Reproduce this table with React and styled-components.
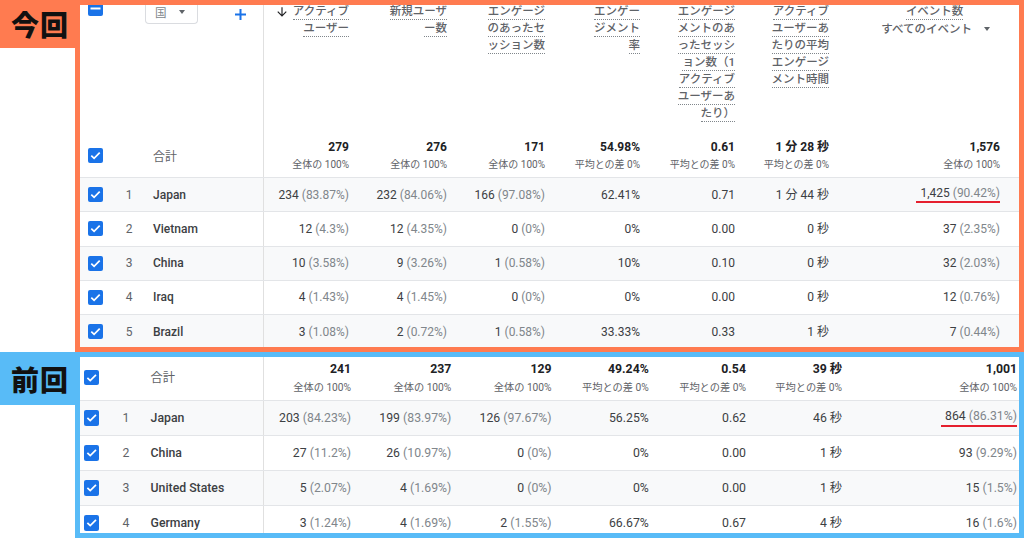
import React from 'react'
import styled, { createGlobalStyle } from 'styled-components'

const GlobalStyle = createGlobalStyle`
  * { box-sizing: border-box; }
  html, body { margin: 0; padding: 0; background: #fff; }
  body {
    width: 1024px;
    height: 538px;
    overflow: hidden;
    font-family: Roboto, "Noto Sans CJK JP", sans-serif;
    color: #3c4043;
  }
`

const COLS = '184px 98px 98px 98px 95px 95px 94px 177px'

const Page = styled.div`
  display: flex;
  flex-direction: column;
  width: 1024px;
  height: 538px;
`

const Section = styled.section`
  display: flex;
  height: ${({ $height }) => $height}px;
`

const Tag = styled.div`
  width: 75px;
  height: ${({ $h }) => $h}px;
  padding-left: 5px;
  display: flex;
  align-items: center;
  justify-content: center;
  background: ${({ $color }) => $color};
  font-family: "Noto Sans CJK JP", sans-serif;
  font-weight: 900;
  font-size: 28px;
  color: #111;
  letter-spacing: 1px;
`

const Frame = styled.div`
  flex: 1;
  border: 5px solid ${({ $color }) => $color};
  background: #fff;
  overflow: hidden;
`

const Table = styled.div`
  width: 939px;
  zoom: ${({ $zoom }) => $zoom || 1};
  margin: ${({ $mt }) => $mt || 0}px 0 0 ${({ $ml }) => $ml || 0}px;
`

const Row = styled.div`
  display: grid;
  grid-template-columns: ${COLS};
  height: ${({ $h }) => $h}px;
  background: ${({ $shade }) => ($shade ? '#f8f9fa' : '#fff')};
  border-bottom: ${({ $line }) => ($line ? '1px solid #e3e5e8' : 'none')};
  align-items: ${({ $top }) => ($top ? 'start' : 'stretch')};
`

const DimCell = styled.div`
  display: flex;
  align-items: ${({ $top }) => ($top ? 'flex-start' : 'center')};
  height: 100%;
  padding-left: 8px;
  border-right: 1px solid #e0e0e0;
`

const MetricCell = styled.div`
  display: flex;
  flex-direction: column;
  align-items: flex-end;
  justify-content: ${({ $top }) => ($top ? 'flex-start' : 'center')};
  height: 100%;
  padding-top: ${({ $top }) => ($top ? 2.5 : 0)}px;
  padding-right: ${({ $last }) => ($last ? 19 : 13)}px;
  font-size: 12px;
  white-space: nowrap;
`

const Box = styled.span`
  flex: none;
  width: 15px;
  height: 15px;
  border-radius: 2px;
  background: #1a73e8;
  display: flex;
  align-items: center;
  justify-content: center;
`

const Picker = styled.div`
  display: flex;
  align-items: center;
  width: 53px;
  height: 24px;
  margin-left: 42px;
  margin-top: -1px;
  padding-left: 9px;
  border: 1px solid #dadce0;
  border-top: none;
  border-radius: 0 0 4px 4px;
  font-size: 11.5px;
  color: #80868b;
`

const Caret = styled.span`
  width: 0;
  height: 0;
  margin-left: ${({ $gap }) => $gap}px;
  border-left: 3.5px solid transparent;
  border-right: 3.5px solid transparent;
  border-top: 4px solid #5f6368;
`

const AddBtn = styled.span`
  display: flex;
  margin-left: 37px;
  margin-top: 8px;
`

const HeadLine = styled.div`
  display: flex;
  align-items: center;
  margin-bottom: 1px;
`

const HeadText = styled.span`
  font-size: 11.5px;
  line-height: 15px;
  font-weight: 500;
  color: #5f6368;
  border-bottom: ${({ $plain }) => ($plain ? 'none' : '1px dotted #80868b')};
`

const EventHead = styled.div`
  display: flex;
  flex-direction: column;
  align-items: center;
  margin-right: 10px;
`

const Picked = styled.div`
  display: flex;
  align-items: center;
  margin-top: 1px;
  padding-left: 2px;
`

const TotalLabel = styled.span`
  margin-left: 50px;
  font-size: 12px;
  color: #5f6368;
`

const Index = styled.span`
  width: 24px;
  margin-left: 14px;
  text-align: center;
  font-size: 12px;
  color: #5f6368;
`

const Name = styled.span`
  margin-left: 12px;
  font-size: 12px;
  font-weight: 500;
  color: #3c4043;
`

const Big = styled.span`
  font-size: 12px;
  line-height: 16px;
  font-weight: 700;
  color: #202124;
`

const Sub = styled.span`
  margin-top: 3px;
  font-size: 10px;
  line-height: 13px;
  color: #5f6368;
`

const Value = styled.span`
  line-height: 14px;
  color: #3c4043;
  padding-left: ${({ $mark }) => ($mark ? 4 : 0)}px;
  padding-bottom: ${({ $mark }) => ($mark ? 1 : 0)}px;
  border-bottom: ${({ $mark }) => ($mark ? '2px solid #e5202e' : 'none')};
`

const Pct = styled.span`
  color: #80868b;
`

const Check = ({ minus }) => (
  <Box>
    <svg width="15" height="15" viewBox="0 0 15 15">
      {minus ? (
        <rect x="2.5" y="6.5" width="10" height="2" fill="#fff" />
      ) : (
        <path d="M3.3 7.6 L6.1 10.3 L11.7 4.7" stroke="#fff" strokeWidth="1.7" fill="none" />
      )}
    </svg>
  </Box>
)

const SortArrow = () => (
  <svg width="14" height="14" viewBox="0 0 24 24" style={{ marginRight: 4 }}>
    <path d="M20 12l-1.41-1.41L13 16.17V4h-2v12.17l-5.58-5.59L4 12l8 8 8-8z" fill="#202124" />
  </svg>
)

const headers = [
  { lines: ['アクティブ', 'ユーザー'], sort: true },
  { lines: ['新規ユーザ', 'ー数'] },
  { lines: ['エンゲージ', 'のあったセ', 'ッション数'] },
  { lines: ['エンゲー', 'ジメント', '率'] },
  { lines: ['エンゲージ', 'メントのあ', 'ったセッシ', 'ョン数（1', 'アクティブ', 'ユーザーあ', 'たり）'] },
  { lines: ['アクティブ', 'ユーザーあ', 'たりの平均', 'エンゲージ', 'メント時間'] },
]

const ALL = '全体の 100%'
const AVG = '平均との差 0%'

const current = {
  totals: [['279', ALL], ['276', ALL], ['171', ALL], ['54.98%', AVG], ['0.61', AVG], ['1 分 28 秒', AVG], ['1,576', ALL]],
  rows: [
    { name: 'Japan', mark: true, cells: [['234', '83.87%'], ['232', '84.06%'], ['166', '97.08%'], '62.41%', '0.71', '1 分 44 秒', ['1,425', '90.42%']] },
    { name: 'Vietnam', cells: [['12', '4.3%'], ['12', '4.35%'], ['0', '0%'], '0%', '0.00', '0 秒', ['37', '2.35%']] },
    { name: 'China', cells: [['10', '3.58%'], ['9', '3.26%'], ['1', '0.58%'], '10%', '0.10', '0 秒', ['32', '2.03%']] },
    { name: 'Iraq', cells: [['4', '1.43%'], ['4', '1.45%'], ['0', '0%'], '0%', '0.00', '0 秒', ['12', '0.76%']] },
    { name: 'Brazil', cells: [['3', '1.08%'], ['2', '0.72%'], ['1', '0.58%'], '33.33%', '0.33', '1 秒', ['7', '0.44%']] },
  ],
}

const previous = {
  totals: [['241', ALL], ['237', ALL], ['129', ALL], ['49.24%', AVG], ['0.54', AVG], ['39 秒', AVG], ['1,001', ALL]],
  rows: [
    { name: 'Japan', mark: true, cells: [['203', '84.23%'], ['199', '83.97%'], ['126', '97.67%'], '56.25%', '0.62', '46 秒', ['864', '86.31%']] },
    { name: 'China', cells: [['27', '11.2%'], ['26', '10.97%'], ['0', '0%'], '0%', '0.00', '1 秒', ['93', '9.29%']] },
    { name: 'United States', cells: [['5', '2.07%'], ['4', '1.69%'], ['0', '0%'], '0%', '0.00', '1 秒', ['15', '1.5%']] },
    { name: 'Germany', cells: [['3', '1.24%'], ['4', '1.69%'], ['2', '1.55%'], '66.67%', '0.67', '4 秒', ['16', '1.6%']] },
  ],
}

const HeaderRow = () => (
  <Row $h={132} $top>
    <DimCell $top>
      <Check minus />
      <Picker>
        国<Caret $gap={12} />
      </Picker>
      <AddBtn>
        <svg width="11" height="11" viewBox="0 0 11 11">
          <rect x="4.5" y="0" width="2" height="11" fill="#1a73e8" />
          <rect x="0" y="4.5" width="11" height="2" fill="#1a73e8" />
        </svg>
      </AddBtn>
    </DimCell>
    {headers.map((h, i) => (
      <MetricCell key={i} $top>
        {h.lines.map((line, j) => (
          <HeadLine key={j}>
            {h.sort && j === 0 && <SortArrow />}
            <HeadText>{line}</HeadText>
          </HeadLine>
        ))}
      </MetricCell>
    ))}
    <MetricCell $top $last>
      <EventHead>
        <HeadLine>
          <HeadText>イベント数</HeadText>
        </HeadLine>
        <Picked>
          <HeadText $plain>すべてのイベント</HeadText>
          <Caret $gap={12} />
        </Picked>
      </EventHead>
    </MetricCell>
  </Row>
)

const DataTable = ({ data, header, zoom, mt, ml }) => (
  <Table $zoom={zoom} $mt={mt} $ml={ml}>
    {header && <HeaderRow />}
    <Row $h={45} $line>
      <DimCell>
        <Check />
        <TotalLabel>合計</TotalLabel>
      </DimCell>
      {data.totals.map(([big, sub], i) => (
        <MetricCell key={i} $last={i === 6}>
          <Big>{big}</Big>
          <Sub>{sub}</Sub>
        </MetricCell>
      ))}
    </Row>
    {data.rows.map((row, r) => (
      <Row key={r} $h={34.25} $line $shade={r % 2 === 0}>
        <DimCell>
          <Check />
          <Index>{r + 1}</Index>
          <Name>{row.name}</Name>
        </DimCell>
        {row.cells.map((c, i) => (
          <MetricCell key={i} $last={i === 6}>
            <Value $mark={row.mark && i === 6}>
              {Array.isArray(c) ? (
                <>
                  {c[0]} <Pct>({c[1]})</Pct>
                </>
              ) : (
                c
              )}
            </Value>
          </MetricCell>
        ))}
      </Row>
    ))}
  </Table>
)

export default function App() {
  return (
    <>
      <GlobalStyle />
      <Page>
        <Section $height={352}>
          <Tag $color="#ff7b50" $h={48}>今回</Tag>
          <Frame $color="#ff7b50">
            <DataTable data={current} header mt={-4} />
          </Frame>
        </Section>
        <Section $height={186}>
          <Tag $color="#58bbf7" $h={53}>前回</Tag>
          <Frame $color="#58bbf7">
            <DataTable data={previous} zoom={1.023} mt={-2} ml={-4} />
          </Frame>
        </Section>
      </Page>
    </>
  )
}
